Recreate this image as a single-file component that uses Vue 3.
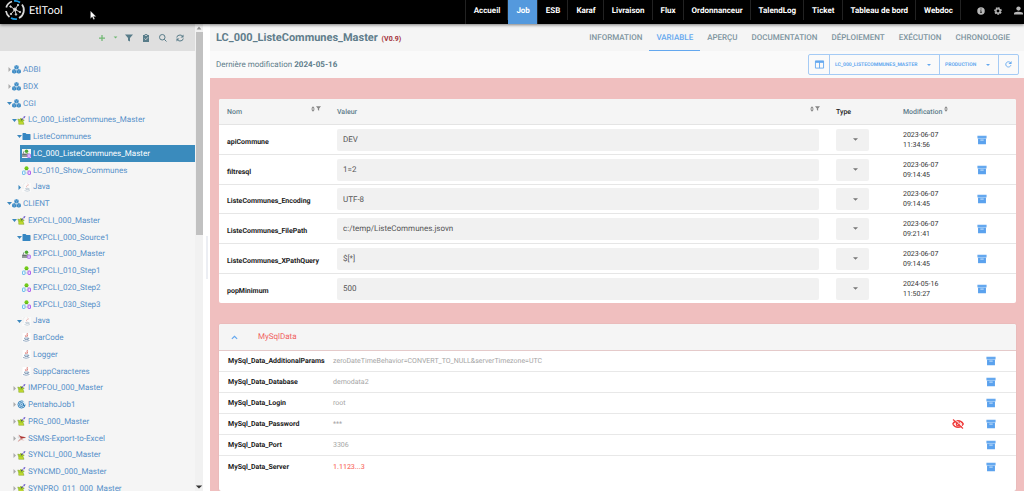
<script setup>
import { ref } from 'vue'

const nav = ['Accueil', 'Job', 'ESB', 'Karaf', 'Livraison', 'Flux', 'Ordonnanceur', 'TalendLog', 'Ticket', 'Tableau de bord', 'Webdoc']
const tabs = ['INFORMATION', 'VARIABLE', 'APERÇU', 'DOCUMENTATION', 'DÉPLOIEMENT', 'EXÉCUTION', 'CHRONOLOGIE']

const tree = [
  { t: 'ADBI', l: 0, i: 'cubes', a: 'closed' },
  { t: 'BDX', l: 0, i: 'cubes', a: 'closed' },
  { t: 'CGI', l: 0, i: 'cubes', a: 'open' },
  { t: 'LC_000_ListeCommunes_Master', l: 1, i: 'talend', a: 'open' },
  { t: 'ListeCommunes', l: 2, i: 'folder', a: 'open' },
  { t: 'LC_000_ListeCommunes_Master', l: 3, i: 'master', selected: true },
  { t: 'LC_010_Show_Communes', l: 3, i: 'step' },
  { t: 'Java', l: 2, i: 'javaGroup', a: 'closed', dark: true },
  { t: 'CLIENT', l: 0, i: 'cubes', a: 'open' },
  { t: 'EXPCLI_000_Master', l: 1, i: 'talend', a: 'open' },
  { t: 'EXPCLI_000_Source1', l: 2, i: 'folder', a: 'open' },
  { t: 'EXPCLI_000_Master', l: 3, i: 'master' },
  { t: 'EXPCLI_010_Step1', l: 3, i: 'step' },
  { t: 'EXPCLI_020_Step2', l: 3, i: 'step' },
  { t: 'EXPCLI_030_Step3', l: 3, i: 'step' },
  { t: 'Java', l: 2, i: 'javaGroup', a: 'open' },
  { t: 'BarCode', l: 3, i: 'java' },
  { t: 'Logger', l: 3, i: 'java' },
  { t: 'SuppCaracteres', l: 3, i: 'java' },
  { t: 'IMPFOU_000_Master', l: 1, i: 'talend', a: 'closed' },
  { t: 'PentahoJob1', l: 1, i: 'pentaho', a: 'closed' },
  { t: 'PRG_000_Master', l: 1, i: 'talend', a: 'closed' },
  { t: 'SSMS-Export-to-Excel', l: 1, i: 'ssms', a: 'closed' },
  { t: 'SYNCLI_000_Master', l: 1, i: 'talend', a: 'closed' },
  { t: 'SYNCMD_000_Master', l: 1, i: 'talend', a: 'closed' },
  { t: 'SYNPRO_011_000_Master', l: 1, i: 'talend', a: 'closed' }
]

const variables = ref([
  { name: 'apiCommune', value: 'DEV', date: '2023-06-07', time: '11:34:56' },
  { name: 'filtresql', value: '1=2', date: '2023-06-07', time: '09:14:45' },
  { name: 'ListeCommunes_Encoding', value: 'UTF-8', date: '2023-06-07', time: '09:14:45' },
  { name: 'ListeCommunes_FilePath', value: 'c:/temp/ListeCommunes.jsovn', date: '2023-06-07', time: '09:21:41' },
  { name: 'ListeCommunes_XPathQuery', value: '$[*]', date: '2023-06-07', time: '09:14:45' },
  { name: 'popMinimum', value: '500', date: '2024-05-16', time: '11:50:27' }
])

const mysql = [
  { name: 'MySql_Data_AdditionalParams', value: 'zeroDateTimeBehavior=CONVERT_TO_NULL&serverTimezone=UTC' },
  { name: 'MySql_Data_Database', value: 'demodata2' },
  { name: 'MySql_Data_Login', value: 'root' },
  { name: 'MySql_Data_Password', value: '***', hidden: true },
  { name: 'MySql_Data_Port', value: '3306' },
  { name: 'MySql_Data_Server', value: '1.1123...3', alert: true }
]
</script>

<template>
  <div class="app">
    <svg class="defs" aria-hidden="true">
      <symbol id="archive" viewBox="0 0 24 24"><path fill="#64a8ef" d="M1 2h22v6H1z" /><path fill="#5ba2ee" d="M2.500 8h19v14h-19z" /><path fill="#b5d6f8" d="M1 7h22v1.500H1zM8 11h8v2.500H8z" /></symbol>
      <symbol id="caret" viewBox="0 0 10 10"><path fill="currentColor" d="M0 2.500h10L5 7.500z" /></symbol>
      <symbol id="sort" viewBox="0 0 10 14"><path fill="#858585" d="M5 0l4.500 6h-9zM5 14l4.500-6h-9z" /><path fill="#b0b0b0" d="M2 5h6v4H2z" /></symbol>
      <symbol id="funnel" viewBox="0 0 16 16"><path fill="currentColor" d="M0 1h16l-6 7v7l-4-2V8z" /></symbol>
      <symbol id="cubes" viewBox="0 0 18 18"><g fill="#3586c2" stroke="#dfeaf3" stroke-width=".5"><path d="M9 0l4.500 2v5L9 9 4.500 7V2zM4.500 8L9 10v5.500l-4.500 2L0 15.500V10zM13.500 8L18 10v5.500l-4.500 2-4.500-2V10z" /><path fill="none" d="M4.500 2L9 4l4.500-2M9 4v5M0 10l4.500 2L9 10l4.500 2 4.500-2M4.500 12v5M13.500 12v5" /></g></symbol>
      <symbol id="talend" viewBox="0 0 18 18"><path fill="#a6cf26" stroke="#85a72a" d="M1.500 6l4 1L8 4l2 3 4.500 1-2.500 3 2 5.500H3.500V12z" /><path fill="#d6df35" d="M4 13h8v2H4z" /><path fill="#6755c9" d="M8 7.500l5-5 1 1-5 5zM13 1l4-1-2 5z" /><path fill="#333" d="M8 8l2-2 1 1-2 2z" /></symbol>
      <symbol id="folder" viewBox="0 0 18 18"><path fill="#3586c2" d="M1 3q0-1 1-1h5l2 2h7q1 0 1 1v10q0 1-1 1H2q-1 0-1-1z" /></symbol>
      <symbol id="master" viewBox="0 0 18 18"><path fill="#f4f6f6" d="M0 0h18v18H0z" /><path fill="#92999a" d="M0 9h11v7H0zM2 5h2v4H2z" /><path fill="#686f70" d="M1 10h8v2H1z" /><circle cx="9" cy="4.500" r="3.500" fill="#4ca832" /><path d="M9 8l5 3" stroke="#8ac15b" stroke-width="2" /><rect x="11" y="10" width="6" height="7" rx="1.500" fill="#d9bafa" stroke="#a863ea" stroke-width="1.500" /></symbol>
      <symbol id="step" viewBox="0 0 18 18"><path fill="none" stroke="#a5c6c2" stroke-width="1.500" d="M9 6L4 12M9 6l5 6M4 14h10" /><circle cx="9" cy="4.500" r="4" fill="#72cb18" /><path fill="#46910f" d="M7 6h4v1H7z" /><rect x="1" y="10" width="5" height="7" rx="1" fill="#e5f7ff" stroke="#67b9eb" stroke-width="1.800" /><rect x="12" y="10" width="5" height="7" rx="1" fill="#ead5ff" stroke="#a958ed" stroke-width="1.800" /></symbol>
      <symbol id="java" viewBox="0 0 18 18"><path fill="#fff" d="M1 0h16v18H1z" /><g fill="none" stroke="#6887a8" stroke-width="1.400"><path d="M5 10h7v3H6zM12 10q4 0 0 3M2 15q6 3 13 0" /></g><path fill="none" stroke="#d66760" stroke-width="1.500" d="M8 8q-3-3 1-4t1-4M10 8q-1-2 2-4" /></symbol>
      <symbol id="javaGroup" viewBox="0 0 18 18"><path fill="#fafafa" d="M0 0h18v18H0z" /><g fill="none" stroke="#b4c1ce" stroke-width="1.300"><path d="M7 11h6v2H8zM13 11q4 0 0 3M5 15q5 3 11 0" /></g><path fill="none" stroke="#e4a09a" stroke-width="1.300" d="M10 9q-3-3 1-4t0-3" /><path fill="none" stroke="#dedede" d="M2 12V4q0-3 4-3" /></symbol>
      <symbol id="pentaho" viewBox="0 0 18 18"><circle cx="9" cy="9" r="8.500" fill="#deedf8" /><g fill="none" stroke="#2677b4" stroke-width="1.700"><circle cx="9" cy="9" r="7" stroke-dasharray="36 8" /><circle cx="9" cy="9" r="4" /><path d="M13 7v4q2 2 3-1" /><circle cx="9" cy="9" r="1" /></g></symbol>
      <symbol id="ssms" viewBox="0 0 18 18"><path fill="#c98582" d="M3 1q3 4 13 5l2 2q-6 0-9 2-4 2-7 6 2-5 5-7-3-2-4-8z" /><path fill="#ad3431" d="M4 1q2 5 11 5l2 1-9 2z" /><path fill="#d9aaa6" d="M1 16q2-5 7-7l7 4-7-1z" /><path fill="#ddd" d="M1 5l3-1 3 4-5 1z" /></symbol>
    </svg>

    <header class="topbar">
      <svg class="logo" viewBox="0 0 40 40" aria-hidden="true">
        <g fill="none" stroke-width="3.500"><path stroke="#d8d8d8" d="M14 3A18 18 0 0 0 2.500 15M2 22A18 18 0 0 0 9 34M28 36A18 18 0 0 0 34 9" /><path stroke="#1b9be3" d="M18 2A18 18 0 0 1 30 5M12 36A18 18 0 0 0 24 38" /></g>
        <g stroke="#ccc" stroke-width="2" fill="#e2e2e2"><path d="M20 19L11 13M20 19L26 10M20 19L30 24M20 19L12 28M20 19L22 29" /><circle cx="20" cy="19" r="3" /><circle cx="11" cy="13" r="1.500" /><circle cx="26" cy="10" r="1.500" /><circle cx="30" cy="24" r="1.500" /><circle cx="12" cy="28" r="1.500" /><circle cx="22" cy="29" r="1.500" /></g>
      </svg>
      <span class="brand">EtlTool</span>
      <nav class="nav">
        <a v-for="n in nav" :key="n" href="#" :class="{ active: n === 'Job' }">{{ n }}</a>
      </nav>
      <div class="user">
        <button aria-label="Informations"><svg viewBox="0 0 16 16"><circle cx="8" cy="8" r="7.500" fill="#b8b8b8" /><path fill="#222" d="M7 3h2v2H7zM6 7h3v4h1v1H6v-1h1V8H6z" /></svg></button>
        <button aria-label="Paramètres"><svg viewBox="0 0 16 16"><path fill="none" stroke="#b8b8b8" stroke-width="3" stroke-dasharray="3.600 2" d="M8 1.800a6.200 6.200 0 1 1 0 12.400a6.200 6.200 0 0 1 0-12.400" /><circle cx="8" cy="8" r="4.300" fill="none" stroke="#b8b8b8" stroke-width="2.800" /></svg></button>
        <button class="account" aria-label="Compte"><svg viewBox="0 0 16 16"><circle cx="8" cy="4.500" r="3.800" fill="#b8b8b8" /><path fill="#b8b8b8" d="M0 15v-2q0-3 8-3t8 3v2z" /></svg></button>
      </div>
      <svg class="pointer" viewBox="0 0 12 18" aria-hidden="true"><path fill="#fff" stroke="#555" stroke-width=".6" d="M1 0v15l3.500-3.500L7 17l2.500-1L7 11h5z" /></svg>
    </header>

    <div class="body">
      <aside class="sidebar">
        <div class="pane">
          <div class="tools">
            <button aria-label="Ajouter"><svg viewBox="0 0 16 16"><path stroke="#70b873" stroke-width="2.500" d="M8 2v12M2 8h12" /></svg></button>
            <button class="more" aria-label="Autres ajouts"><svg viewBox="0 0 16 16"><path fill="#70b873" d="M2 5h12l-6 6z" /></svg></button>
            <button aria-label="Filtrer"><svg class="slate"><use href="#funnel" /></svg></button>
            <button aria-label="Tâches"><svg viewBox="0 0 16 16"><path fill="#587c89" d="M2 2h3q0-2 3-2t3 2h3v14H2z" /><path fill="none" stroke="#dfdfdf" stroke-width="1.600" d="M5 9l2.500 2.500L12 6.500" /><path fill="#dfdfdf" d="M6 2h4v1.500H6z" /></svg></button>
            <button aria-label="Rechercher"><svg viewBox="0 0 16 16"><path fill="none" stroke="#587c89" stroke-width="2" d="M10.500 10.500L15 15M6.500 1a5.500 5.500 0 1 1 0 11a5.500 5.500 0 0 1 0-11" /></svg></button>
            <button aria-label="Actualiser"><svg viewBox="0 0 16 16"><g fill="none" stroke="#587c89" stroke-width="2"><path d="M1.500 7Q2 2 8 2q4 0 5.500 3M14.500 9Q14 14 8 14q-4 0-5.500-3" /></g><path fill="#587c89" d="M15 1v6H9zM1 15V9h6z" /></svg></button>
          </div>
          <ul class="tree">
            <li v-for="(n, k) in tree" :key="k" :class="['level' + n.l, { selected: n.selected }]">
              <a href="#">
                <svg v-if="n.a" class="arrow" :class="{ dark: n.dark || n.a === 'open' }" viewBox="0 0 10 10"><path fill="currentColor" :d="n.a === 'open' ? 'M0 2h10L5 8z' : 'M3 0l5 5-5 5z'" /></svg>
                <svg class="node"><use :href="'#' + n.i" /></svg>
                <span>{{ n.t }}</span>
              </a>
            </li>
          </ul>
        </div>
        <div class="scroll" aria-hidden="true">
          <svg viewBox="0 0 10 10"><path fill="#909090" d="M2 7h6L5 3z" /></svg>
          <div class="track"><div class="thumb"></div></div>
          <svg viewBox="0 0 10 10"><path fill="#333" d="M1 3h8L5 7z" /></svg>
        </div>
      </aside>
      <div class="splitter"><div class="grip"></div></div>

      <main class="main">
        <div class="titlebar">
          <h1>LC_000_ListeCommunes_Master <small>(V0.9)</small></h1>
          <nav class="tabs">
            <a v-for="t in tabs" :key="t" href="#" :class="{ active: t === 'VARIABLE' }">{{ t }}</a>
          </nav>
        </div>
        <div class="infobar">
          <p>Dernière modification <b>2024-05-16</b></p>
          <div class="group">
            <button aria-label="Colonnes"><svg class="columns" viewBox="0 0 20 20"><path fill="none" stroke="#64a8ef" stroke-width="2" d="M1 2h18v16H1zM1 4.500h18M10 4v14" /><path fill="#64a8ef" d="M1 2h18v4H1z" /></svg></button>
            <label class="pick"><select aria-label="Job"><option>LC_000_LISTECOMMUNES_MASTER</option></select><svg><use href="#caret" /></svg></label>
            <label class="pick"><select aria-label="Environnement"><option>PRODUCTION</option></select><svg><use href="#caret" /></svg></label>
            <button aria-label="Recharger"><svg class="reload" viewBox="0 0 16 16"><path fill="none" stroke="#64a8ef" stroke-width="2" d="M13.500 9.500A6 6 0 1 1 12 3.500" /><path fill="#64a8ef" d="M15 0v7H8z" /></svg></button>
          </div>
        </div>

        <div class="content">
          <section class="card">
            <table class="vars">
              <colgroup><col class="c-name"><col><col class="c-type"><col class="c-date"><col class="c-act"></colgroup>
              <thead>
                <tr>
                  <th><div class="head">Nom<span class="marks"><svg class="sort"><use href="#sort" /></svg><svg class="funnel"><use href="#funnel" /></svg></span></div></th>
                  <th><div class="head">Valeur<span class="marks"><svg class="sort"><use href="#sort" /></svg><svg class="funnel"><use href="#funnel" /></svg></span></div></th>
                  <th class="black">Type</th>
                  <th><div class="head near">Modification<span class="marks"><svg class="sort"><use href="#sort" /></svg></span></div></th>
                  <th></th>
                </tr>
              </thead>
              <tbody>
                <tr v-for="v in variables" :key="v.name">
                  <td><label class="name" :for="v.name">{{ v.name }}</label></td>
                  <td><input :id="v.name" v-model="v.value" type="text"></td>
                  <td><label class="type"><select :aria-label="'Type ' + v.name"><option></option></select><svg><use href="#caret" /></svg></label></td>
                  <td class="date">{{ v.date }}<br>{{ v.time }}</td>
                  <td><button class="act" aria-label="Archiver"><svg><use href="#archive" /></svg></button></td>
                </tr>
              </tbody>
            </table>
          </section>

          <section class="card context">
            <button class="fold" aria-expanded="true"><svg viewBox="0 0 12 12"><path fill="none" stroke="#64a8ef" stroke-width="2" d="M1.500 8.500L6 4l4.500 4.500" /></svg><span>MySqlData</span></button>
            <table class="params">
              <colgroup><col class="c-param"><col><col class="c-eye"><col class="c-arch"></colgroup>
              <tbody>
                <tr v-for="p in mysql" :key="p.name">
                  <th scope="row">{{ p.name }}</th>
                  <td :class="{ alert: p.alert }">{{ p.value }}</td>
                  <td><button v-if="p.hidden" class="act eye" aria-label="Afficher la valeur"><svg viewBox="0 0 24 20"><path fill="none" stroke="#ef3d3d" stroke-width="3" d="M1.500 10Q5 3.500 12 3.500T22.500 10Q19 16.500 12 16.500T1.500 10" /><circle cx="12" cy="10" r="3.500" fill="none" stroke="#ef3d3d" stroke-width="2.500" /><path stroke="#fff" stroke-width="2" d="M4-.5L23 17" /><path stroke="#ef3d3d" stroke-width="2.200" d="M2 1l20 18" /></svg></button></td>
                  <td><button class="act" aria-label="Archiver"><svg><use href="#archive" /></svg></button></td>
                </tr>
              </tbody>
            </table>
          </section>
        </div>
      </main>
    </div>
  </div>
</template>

<style>
body { margin: 0; overflow: hidden; }
</style>

<style scoped>
.app { display: flex; flex-direction: column; height: 100vh; overflow: hidden; background: #fff; color: #607d8b; font: 8px/12px Roboto, "Liberation Sans", sans-serif; text-rendering: geometricPrecision; }
.app * { box-sizing: border-box; }
.defs { position: absolute; width: 0; height: 0; }
a { color: inherit; text-decoration: none; }
button { display: flex; align-items: center; justify-content: center; margin: 0; padding: 0; border: 0; background: none; font: inherit; color: inherit; text-rendering: inherit; cursor: pointer; }
svg { display: block; flex: none; overflow: visible; }
select, input { margin: 0; border: 0; border-radius: 0; outline: 0; font: inherit; color: inherit; text-rendering: inherit; appearance: none; }

.topbar { position: relative; z-index: 2; display: flex; align-items: stretch; flex: none; height: 24px; background: #000; color: #fff; box-shadow: 0 1px 3px rgba(0, 0, 0, .5); }
.logo { width: 20px; height: 20px; margin-left: 5px; }
.brand { margin-left: 4px; font-size: 11px; line-height: 21px; }
.nav { display: flex; margin: 0 16px 0 auto; padding-bottom: 4px; font-weight: 700; line-height: 21px; border-left: 1px solid #222; }
.nav a { padding: 0 7px 0 8px; border-right: 1px solid #222; }
.nav .active { margin-bottom: -4px; background: #5499dd; }
.user { display: flex; align-items: center; gap: 9px; height: 21px; margin-right: 1px; }
.user svg { width: 8px; height: 8px; }
.user .account { margin-left: 3px; }
.user .account svg { width: 9px; height: 9px; }
.pointer { position: absolute; left: 90px; top: 11px; width: 6px; height: 9px; }

.body { display: flex; flex: 1; min-height: 0; }
.sidebar { display: flex; flex: none; width: 203px; }
.pane { flex: 1; min-width: 0; overflow: hidden; background: #f5f5f5; }
.tools { display: flex; align-items: center; justify-content: flex-end; gap: 9px; height: 27px; padding-right: 11px; background: #dfdfdf; }
.tools svg { width: 8px; height: 8px; }
.tools .more svg { width: 5px; height: 5px; }
.tools .more { margin: 0 -2px; }
.slate { color: #587c89; }
.tree { margin: 0; padding: 10px 0 0; list-style: none; color: #5590c9; }
.tree li { height: 17px; }
.tree li:nth-child(4n) { height: 16px; }
.tree a { display: flex; align-items: center; height: 100%; white-space: nowrap; }
.level0 { padding-left: 7px; }
.level1 { padding-left: 12px; }
.level2 { padding-left: 17px; }
.level3 { margin-left: 20px; padding-left: 2px; }
.arrow { width: 5px; height: 5px; color: #aaa; }
.arrow.dark { color: #3b87bd; }
.node { width: 9px; height: 9px; margin-right: 2px; }
.selected { background: #3a8bbd; color: #fff; }
.scroll { display: flex; flex-direction: column; width: 8px; background: #f1f1f1; }
.scroll svg { width: 8px; height: 8px; }
.track { flex: 1; }
.thumb { height: 45%; margin-left: 1px; background: #c1c1c1; }
.splitter { display: flex; align-items: center; flex: none; width: 7px; padding-left: 3px; }
.grip { width: 2px; height: 43px; background: #eceef3; }

.main { display: flex; flex-direction: column; flex: 1; min-width: 0; }
.titlebar { display: flex; justify-content: space-between; flex: none; height: 27px; padding: 0 7px 0 6px; background: #f5f5f5; }
h1 { margin: 0; font-size: 11px; font-weight: 700; line-height: 27px; white-space: nowrap; }
h1 small { margin-left: 1px; font-size: 7px; color: #a33039; }
.tabs { display: flex; line-height: 27px; font-weight: 500; color: #7d949e; }
.tabs a { padding: 0 7px; }
.tabs .active { color: #64a8ef; border-bottom: 1px solid #64a8ef; }
.infobar { display: flex; align-items: center; justify-content: space-between; flex: none; height: 27px; padding: 0 5px 0 6px; background: #fafafa; }
p { margin: 0; }
.group { display: flex; height: 21px; border: 1px solid #a5cbf5; border-radius: 2px; color: #64a8ef; font-size: 5px; font-weight: 700; }
.group > * + * { border-left: 1px solid #a5cbf5; }
.group > button { width: 20px; }
.columns { width: 9px; height: 9px; }
.reload { width: 7px; height: 7px; }
.pick, .type { display: grid; align-items: center; }
.pick > *, .type > * { grid-area: 1 / 1; }
.pick select { padding: 0 21px 0 5px; background: none; }
.pick svg { justify-self: end; width: 4px; height: 4px; margin-right: 8px; pointer-events: none; }

.content { display: flex; flex-direction: column; flex: 1; gap: 21px; min-height: 0; padding: 21px 8px 0 9px; overflow: hidden; background: #f0bfbf; }
.card { flex: none; overflow: hidden; border-radius: 2px; background: #fff; }
table { width: 100%; border-collapse: separate; border-spacing: 0; table-layout: fixed; }
th, td { padding: 0; text-align: left; }
.c-name { width: 118px; }
.c-type { width: 67px; }
.c-date { width: 74px; }
.c-act { width: 39px; }
.vars thead th { height: 26px; background: #f5f5f5; border-bottom: 1px solid #e4e4e4; font-size: 7px; font-weight: 500; }
.vars th:first-child, .vars td:first-child { padding-left: 8px; }
.vars th:nth-child(2), .vars td:nth-child(2) { padding-right: 17px; }
.vars th.black { color: #222; }
.head { display: flex; justify-content: space-between; }
.head.near { justify-content: flex-start; gap: 2px; }
.marks { display: flex; gap: 1px; height: 6px; margin-right: 16px; color: #858585; }
th:nth-child(2) .marks { margin-right: -1px; }
.sort { width: 4px; height: 6px; }
.funnel { width: 5px; height: 5px; }
.vars tbody td { height: 30px; border-bottom: 1px solid #e6e6e6; }
.vars tbody tr:nth-child(3n) td { height: 29px; }
.vars tbody tr:last-child td { border-bottom: 0; }
.name { display: block; padding-top: 4px; font-size: 7px; font-weight: 700; color: #222; }
.vars input { display: block; width: 100%; height: 22px; padding: 0 6px; border-radius: 2px; background: #f1f1f1; color: #555; }
.type { width: 33px; color: #777; }
.type select { width: 33px; height: 22px; border-radius: 2px; background: #f1f1f1; }
.type svg { justify-self: end; width: 5px; height: 5px; margin-right: 11px; pointer-events: none; }
.date { font-size: 7px; line-height: 10px; color: #333; }
.act svg { width: 10px; height: 10px; }
.act.eye svg { width: 12px; height: 10px; }

.card.context { flex: 1 0 auto; box-shadow: 0 0 1px #b99; }
.fold { justify-content: flex-start; width: 100%; height: 27px; padding-left: 12px; gap: 20px; background: #f5f5f5; border-bottom: 1px solid #e5caca; color: #f0625f; }
.fold svg { width: 7px; height: 7px; }
.c-param { width: 114px; }
.c-eye { width: 34px; }
.c-arch { width: 30px; }
.params th, .params td { height: 21px; border-bottom: 1px solid #e8e8e8; font-size: 7px; color: #a5a5a5; }
.params th { padding-left: 9px; font-weight: 700; color: #222; }
.params tr:last-child > * { border-bottom: 0; }
.params td.alert { color: #f97770; font-weight: 500; }
</style>
